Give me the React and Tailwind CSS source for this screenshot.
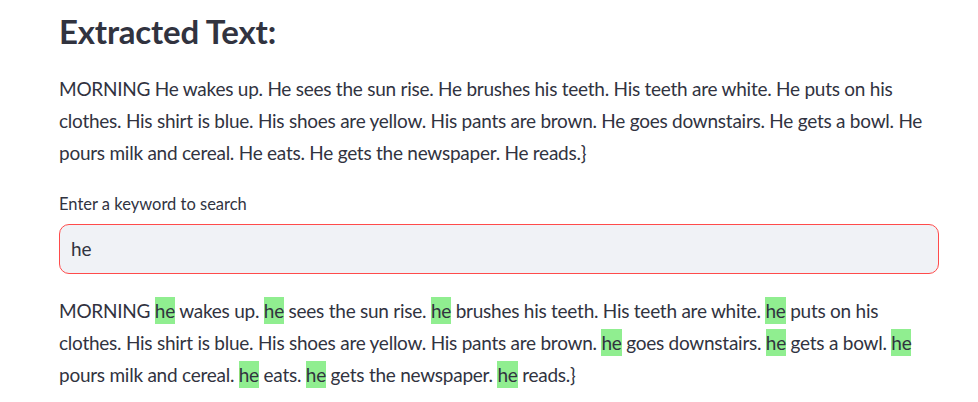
const text =
  'MORNING He wakes up. He sees the sun rise. He brushes his teeth. His teeth are white. He puts on his clothes. His shirt is blue. His shoes are yellow. His pants are brown. He goes downstairs. He gets a bowl. He pours milk and cereal. He eats. He gets the newspaper. He reads.}'

function Highlighted({ text, keyword }) {
  const words = text.split(' ')
  return words.map((w, i) => {
    const sep = i < words.length - 1 ? ' ' : ''
    if (w.toLowerCase() === keyword) {
      return (
        <span key={i}>
          <span className="bg-[#90ee90] py-[2px]">{keyword}</span>
          {sep}
        </span>
      )
    }
    return <span key={i}>{w + sep}</span>
  })
}

export default function App() {
  return (
    <div className="min-h-screen bg-white text-[#31333f] font-['Lato',sans-serif]">
      <div className="w-[880px] ml-[59px] pt-[9px]">
        <h2 className="text-[33px] font-bold leading-[44px] tracking-[-0.2px]">
          Extracted Text:
        </h2>

        <p className="mt-[20px] text-[19px] leading-[32px] tracking-[-0.25px]">
          {text}
        </p>

        <label className="block mt-[23px] text-[16.5px] leading-[24px]">
          Enter a keyword to search
        </label>

        <div className="mt-[8px] h-[50px] rounded-[10px] border border-[#ff4b4b] bg-[#f0f2f6] flex items-center px-[11px]">
          <span className="text-[19px]">he</span>
        </div>

        <p className="mt-[21px] text-[19px] leading-[32px] tracking-[-0.25px]">
          <Highlighted text={text} keyword="he" />
        </p>
      </div>
    </div>
  )
}
